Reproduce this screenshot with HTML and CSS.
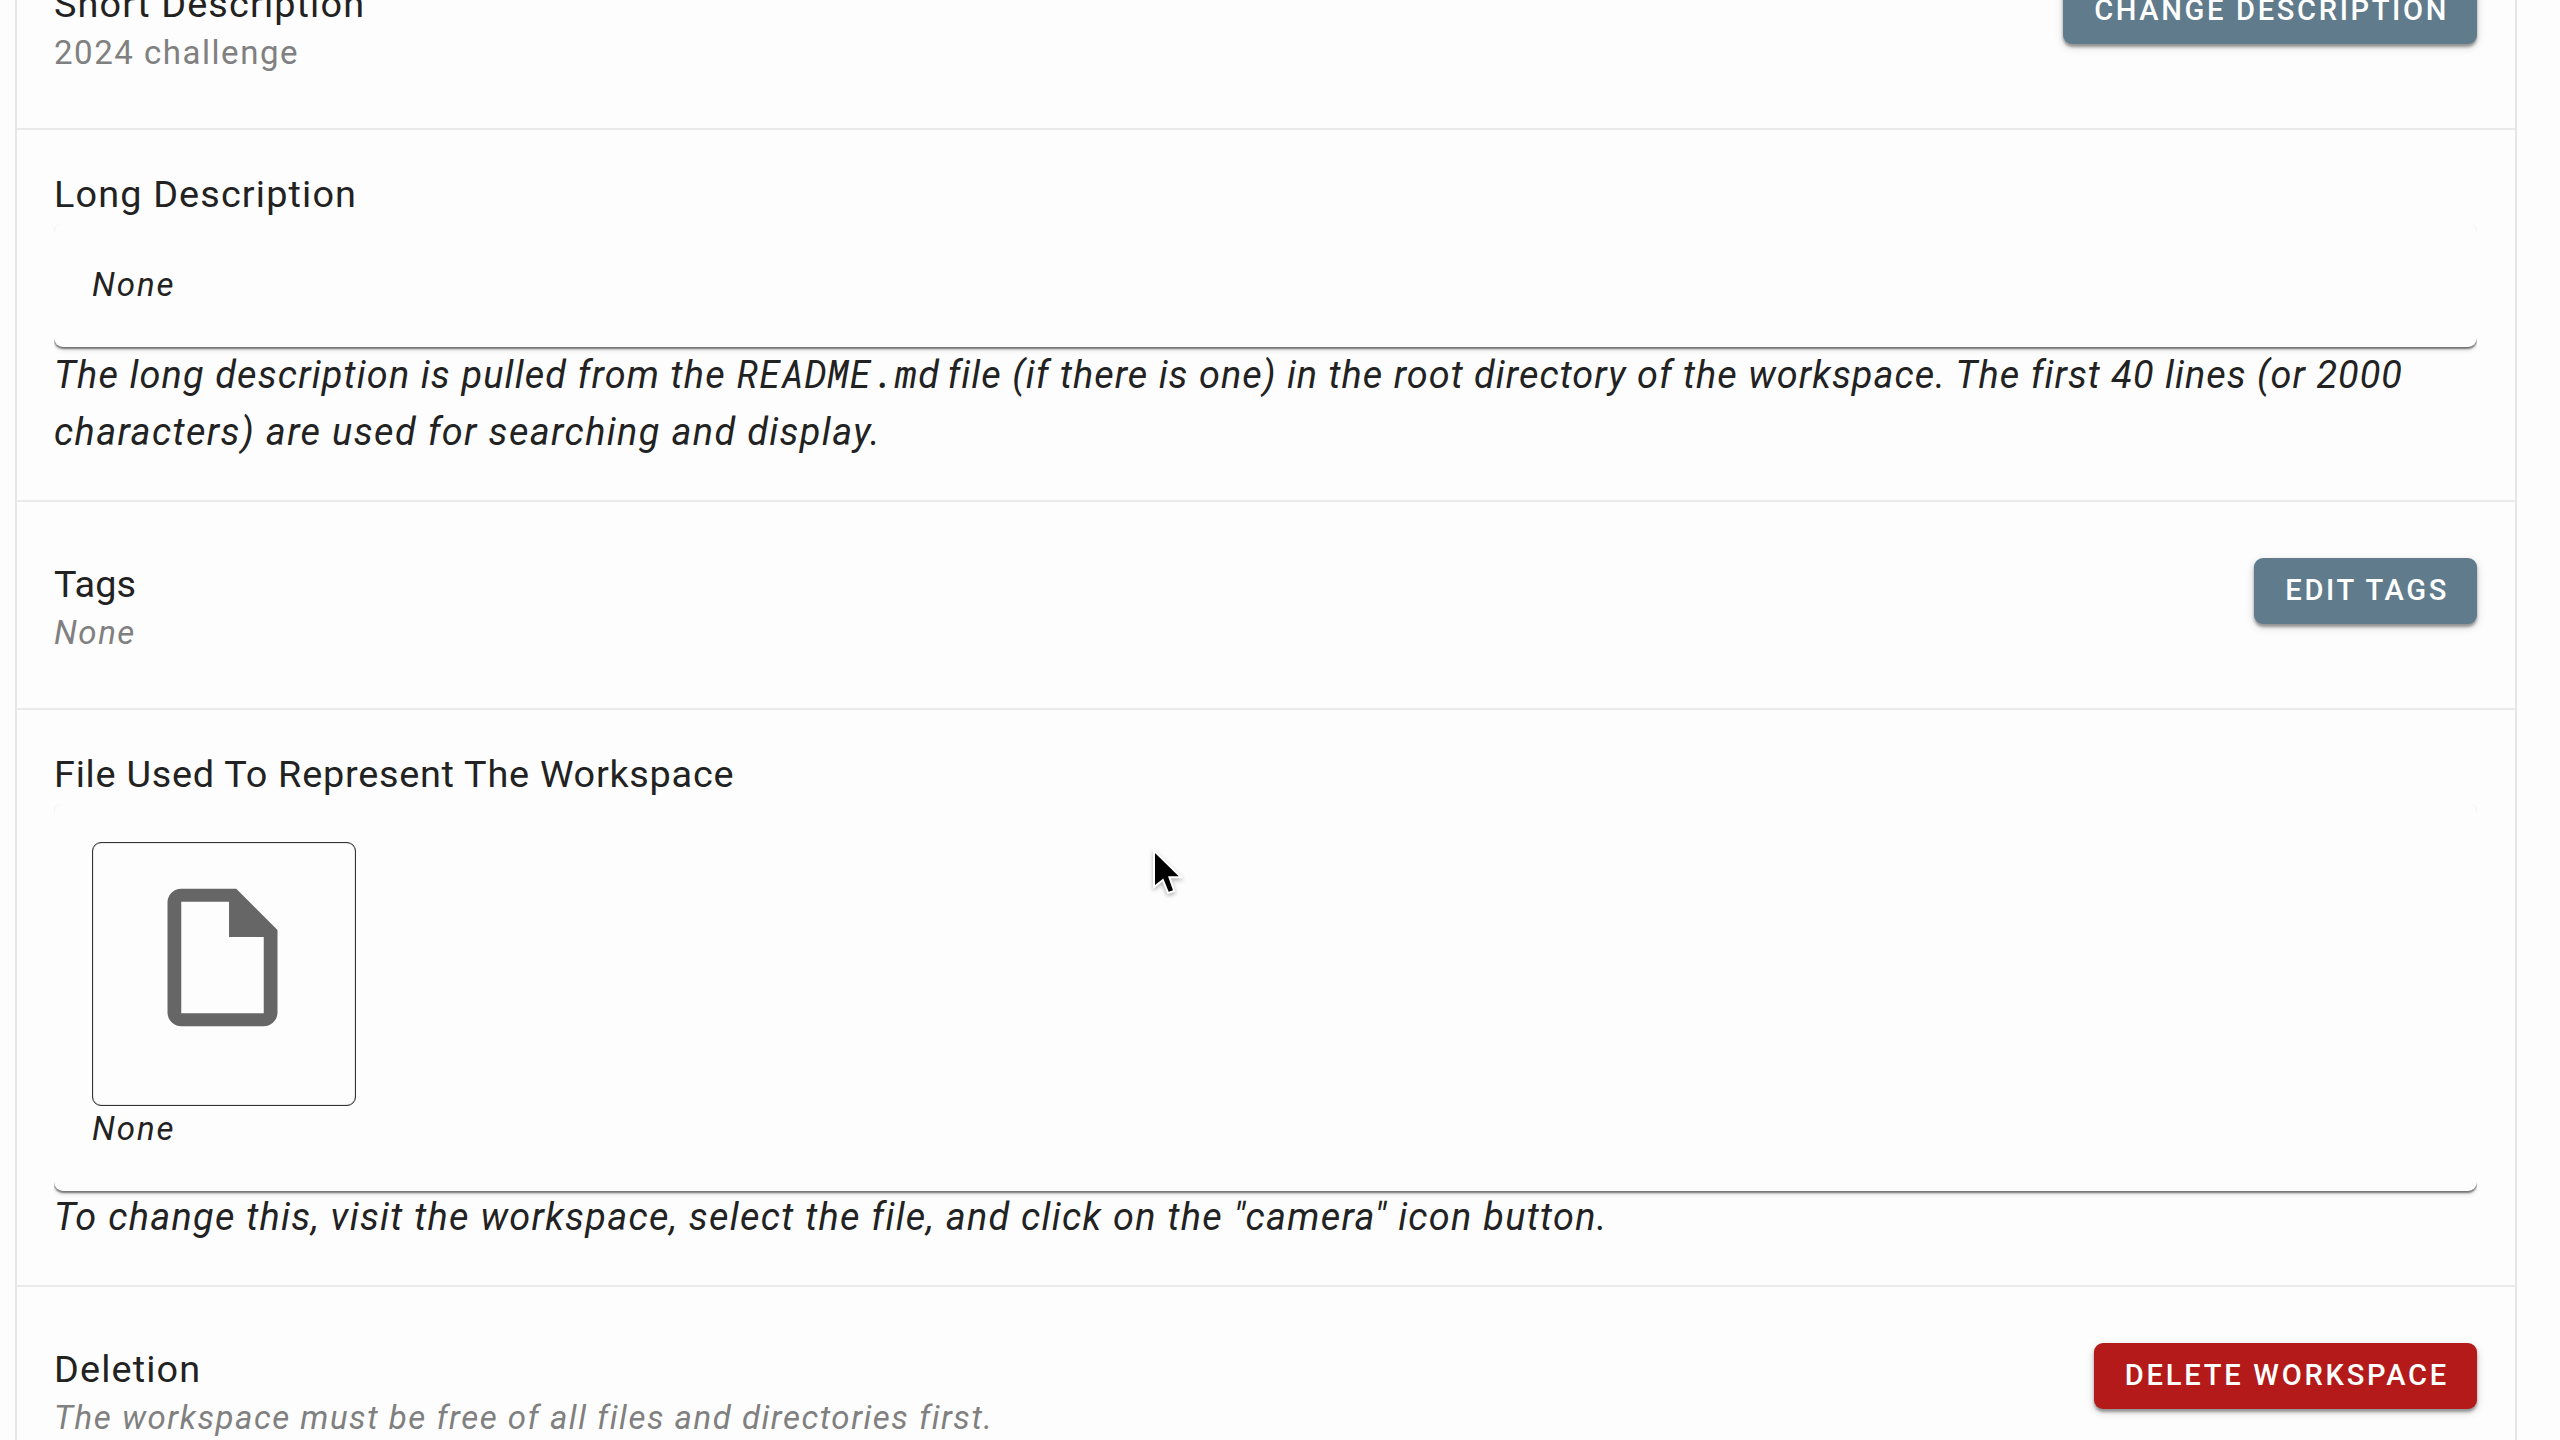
FILE: index.html
```
<!DOCTYPE html>
<html lang="en">
<head>
<meta charset="utf-8">
<title>Workspace Settings</title>
<link rel="stylesheet" href="styles.css">
</head>
<body>
<main class="panel">
  <section class="section row short">
    <div class="labels">
      <h2 class="title wide">Short Description</h2>
      <p class="sub">2024 challenge</p>
    </div>
    <button class="button">CHANGE DESCRIPTION</button>
  </section>

  <section class="section long">
    <h2 class="title wide">Long Description</h2>
    <div class="surface"><p class="sub value">None</p></div>
    <p class="note"><span class="lead">The long description is pulled from the </span><code class="code">README.md</code><span class="rest"> file (if there is one) in the root directory of the workspace. The first 40 lines (or 2000</span><br>characters) are used for searching and display.</p>
  </section>

  <section class="section row">
    <div class="labels">
      <h2 class="title tags">Tags</h2>
      <p class="sub italic">None</p>
    </div>
    <button class="button">EDIT TAGS</button>
  </section>

  <section class="section file">
    <h2 class="title">File Used To Represent The Workspace</h2>
    <div class="surface">
      <div class="thumbnail">
        <svg class="file-icon" viewBox="0 0 24 24"><path d="M14 2H6c-1.100 0-2 .9-2 2v16c0 1.100.9 2 2 2h12c1.100 0 2-.9 2-2V8l-6-6zM6 20.100V3.900h6.950V9H18v11.100H6z"/></svg>
      </div>
      <p class="sub value">None</p>
    </div>
    <p class="note">To change this, visit the workspace, select the file, and click on the "camera" icon button.</p>
  </section>

  <section class="section row">
    <div class="labels">
      <h2 class="title wide">Deletion</h2>
      <p class="sub italic">The workspace must be free of all files and directories first.</p>
    </div>
    <button class="button danger">DELETE WORKSPACE</button>
  </section>
</main>
<svg class="cursor" viewBox="0 0 36 50"><path d="M5 5v32l8.300-6.500 5.400 13.300 4.300-1.600-5-13.900h10.700z" fill="#000" stroke="#fff" stroke-width="4" paint-order="stroke"/></svg>
</body>
</html>
```
FILE: styles.css
```
* { box-sizing: border-box; }

html, body { height: 100%; }

body {
  margin: 0;
  overflow: hidden;
  background: #fdfdfd;
  color: #222;
  font-family: Roboto, "Liberation Sans", sans-serif;
}

h2, p { margin: 0; font-weight: 400; }

/* The page is scrolled partway through the first section. */
.panel {
  margin: -78px 43px 0 15px;
  border: solid #e6e6e6;
  border-width: 0 2px;
}

.section {
  height: 208px;
  padding: 56px 38px 0 37px;
  border-bottom: 2px solid #eaeaea;
}

.row {
  display: flex;
  justify-content: space-between;
  align-items: flex-start;
}

.labels { padding-top: 6px; }

.long { height: 372px; padding-top: 44px; }
.file { height: 577px; padding-top: 44px; }

.title {
  font-size: 37.8px;
  line-height: 40px;
  letter-spacing: .75px;
}
.title.wide { letter-spacing: 1.15px; }
.title.tags { letter-spacing: .1px; }

.sub {
  font-size: 33px;
  line-height: 40px;
  letter-spacing: 1.53px;
  color: #808080;
}
.labels .sub { margin-top: 9px; }
.italic { font-style: italic; }
.value { font-style: italic; color: #222; letter-spacing: 1.9px; }

.surface {
  height: 123px;
  margin-top: 10px;
  padding: 41px 38px;
  border-radius: 9px;
  background: #fdfdfd;
  box-shadow: 0 2px 2px rgba(0, 0, 0, .5), 0 3px 5px rgba(0, 0, 0, .12);
  clip-path: inset(0 0 -14px 0);
}
.file .surface { height: 387px; padding-top: 38px; }
.file .value { margin-top: 3px; }

.thumbnail {
  display: flex;
  justify-content: center;
  width: 264px;
  height: 264px;
  padding-top: 32px;
  border: 1px solid #333;
  border-radius: 9px;
  box-shadow: inset 0 0 1px #333;
}

.file-icon { width: 165px; height: 165px; fill: #666; margin-right: 3px; }

.note {
  font-size: 37.8px;
  line-height: 56.5px;
  letter-spacing: 1.4px;
  font-style: italic;
  white-space: nowrap;
}
.lead { letter-spacing: 1.17px; }
.rest { margin-left: -3px; letter-spacing: 1.06px; }
.file .note { margin-top: -2px; letter-spacing: 1.31px; }

.code {
  font-family: "Roboto Mono", "Liberation Mono", monospace;
  font-size: 37.8px;
  line-height: 0;
  letter-spacing: .48px;
}

.button {
  height: 66px;
  padding: 0 28px 2px 31px;
  border: 0;
  border-radius: 9px;
  background: #607b8b;
  color: #fff;
  font: 500 29.1px/64px Roboto, "Liberation Sans", sans-serif;
  letter-spacing: 2.65px;
  white-space: nowrap;
  box-shadow: 0 3px 3px rgba(0, 0, 0, .35), 0 3px 10px rgba(0, 0, 0, .16);
}
.danger { background: #b41a1a; letter-spacing: 2.75px; }

.cursor {
  position: absolute;
  left: 1150px;
  top: 848px;
  width: 36px;
  height: 50px;
  filter: drop-shadow(0 2px 2px rgba(0, 0, 0, .3));
}
```
